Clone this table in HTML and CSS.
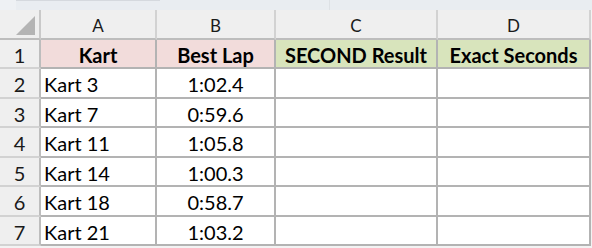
FILE: index.html
```html
<!DOCTYPE html>
<html>
<head>
<meta charset="utf-8">
<link rel="stylesheet" href="styles.css">
</head>
<body>
<div class="topbar">
  <div class="seg seg-a"></div>
  <div class="seg seg-b"></div>
  <div class="seg seg-c"></div>
</div>
<div class="sheet">
  <div class="cell corner"><span class="tri"></span></div>
  <div class="cell colhdr">A</div>
  <div class="cell colhdr">B</div>
  <div class="cell colhdr">C</div>
  <div class="cell colhdr last">D</div>

  <div class="cell rowhdr">1</div>
  <div class="cell th pink">Kart</div>
  <div class="cell th pink">Best Lap</div>
  <div class="cell th green">SECOND Result</div>
  <div class="cell th green">Exact Seconds</div>

  <div class="cell rowhdr">2</div>
  <div class="cell txt">Kart 3</div>
  <div class="cell num">1:02.4</div>
  <div class="cell"></div>
  <div class="cell"></div>

  <div class="cell rowhdr">3</div>
  <div class="cell txt">Kart 7</div>
  <div class="cell num">0:59.6</div>
  <div class="cell"></div>
  <div class="cell"></div>

  <div class="cell rowhdr">4</div>
  <div class="cell txt">Kart 11</div>
  <div class="cell num">1:05.8</div>
  <div class="cell"></div>
  <div class="cell"></div>

  <div class="cell rowhdr">5</div>
  <div class="cell txt">Kart 14</div>
  <div class="cell num">1:00.3</div>
  <div class="cell"></div>
  <div class="cell"></div>

  <div class="cell rowhdr">6</div>
  <div class="cell txt">Kart 18</div>
  <div class="cell num">0:58.7</div>
  <div class="cell"></div>
  <div class="cell"></div>

  <div class="cell rowhdr">7</div>
  <div class="cell txt">Kart 21</div>
  <div class="cell num">1:03.2</div>
  <div class="cell"></div>
  <div class="cell"></div>
</div>
</body>
</html>
```

FILE: styles.css
```css
html, body {
  margin: 0;
  padding: 0;
  background: #f3f3f3;
}
body {
  width: 592px;
  height: 248px;
  overflow: hidden;
  font-family: Lato, "Open Sans", sans-serif;
  color: #000;
}
.topbar {
  height: 10px;
  background: #e9edf1;
  display: flex;
}
.seg {
  height: 10px;
  box-sizing: border-box;
}
.seg-a {
  width: 16px;
  background: #eef1f4;
}
.seg-b {
  width: 144px;
  border-top: 1px solid #d5d9de;
}
.seg-c {
  width: 170px;
  border-right: 1px solid #dde1e5;
}
.sheet {
  display: grid;
  grid-template-columns: 41px 116px 119px 162px 153px;
  grid-template-rows: 30px 29px 30px 29px 30px 29px 30px 29px;
  background: #ffffff;
  width: 591px;
}
.cell {
  box-sizing: border-box;
  border-right: 2px solid #b3b3b3;
  border-bottom: 2px solid #b3b3b3;
  display: flex;
  align-items: center;
  font-size: 20px;
  line-height: 1;
  white-space: nowrap;
  overflow: hidden;
}
.corner {
  background: #efefef;
  position: relative;
  border-right-color: #c9c9c9;
  border-bottom-color: #bdbdbd;
}
.tri {
  position: absolute;
  right: 4px;
  bottom: 3px;
  width: 0;
  height: 0;
  border-left: 19px solid transparent;
  border-bottom: 19px solid #b4b4b4;
}
.colhdr {
  background: #efefef;
  justify-content: center;
  font-size: 17px;
  color: #1a1a1a;
  padding-top: 3px;
  border-right-color: #d2d2d2;
  border-bottom-color: #bdbdbd;
}
.colhdr.last {
  border-right-color: #d2d2d2;
}
.rowhdr {
  background: #efefef;
  justify-content: center;
  color: #1a1a1a;
  padding-top: 2px;
  border-right-color: #bdbdbd;
  border-bottom-color: #d2d2d2;
}
.th {
  justify-content: center;
  font-weight: 700;
  padding-top: 2px;
}
.pink {
  background: #f2dcdb;
}
.green {
  background: #d8e4bc;
}
.txt {
  padding-left: 3px;
  padding-top: 2px;
}
.num {
  justify-content: center;
  padding-top: 2px;
}
```
